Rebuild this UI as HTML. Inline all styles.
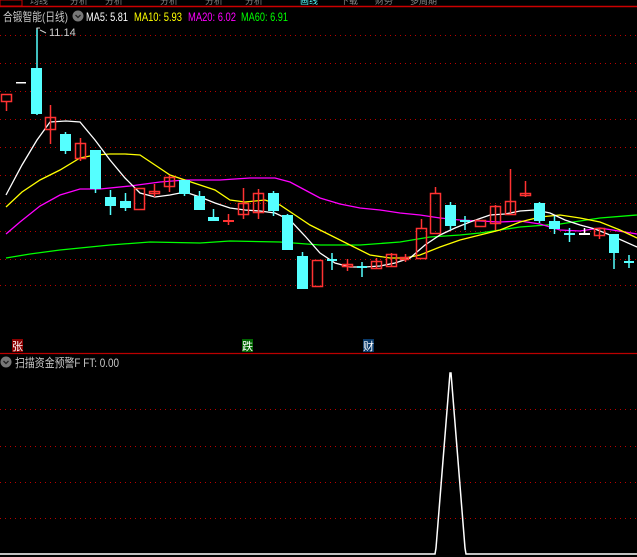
<!DOCTYPE html>
<html><head><meta charset="utf-8"><style>
body{margin:0;background:#000;width:637px;height:557px;overflow:hidden;font-family:"Liberation Sans","Noto Sans CJK SC",sans-serif}
</style></head><body>
<svg width="637" height="557" xmlns="http://www.w3.org/2000/svg" style="display:block">
<rect width="637" height="557" fill="#000"/>
<rect x="0" y="0" width="22" height="6" fill="none" stroke="#c00" stroke-width="1"/>
<line x1="0" y1="6.5" x2="637" y2="6.5" stroke="#c00" stroke-width="1.5"/>
<g fill="#888" font-size="9">
<text x="30" y="4">均线</text><text x="70" y="4">分析</text><text x="105" y="4">分析</text><text x="160" y="4">分析</text><text x="205" y="4">分析</text><text x="245" y="4">分析</text><text x="300" y="4" fill="#5ff">画线</text><text x="340" y="4">下载</text><text x="375" y="4">财务</text><text x="410" y="4">多周期</text>
</g>
<text x="3" y="21" font-size="12" fill="#c8c8c8" textLength="65" lengthAdjust="spacingAndGlyphs">合锻智能(日线)</text>
<circle cx="78" cy="16" r="5.5" fill="#777"/>
<path d="M75.5 15 L78 17.5 L80.5 15" stroke="#222" stroke-width="1.3" fill="none"/>
<text x="86" y="21" font-size="12" fill="#fff" textLength="42" lengthAdjust="spacingAndGlyphs">MA5: 5.81</text>
<text x="134" y="21" font-size="12" fill="#ff0" textLength="48" lengthAdjust="spacingAndGlyphs">MA10: 5.93</text>
<text x="188" y="21" font-size="12" fill="#f0f" textLength="48" lengthAdjust="spacingAndGlyphs">MA20: 6.02</text>
<text x="241" y="21" font-size="12" fill="#0f0" textLength="47" lengthAdjust="spacingAndGlyphs">MA60: 6.91</text>
<g stroke="#b00" stroke-width="1" stroke-dasharray="1,4">
<line x1="0" y1="35.5" x2="637" y2="35.5"/><line x1="0" y1="63.5" x2="637" y2="63.5"/><line x1="0" y1="91.5" x2="637" y2="91.5"/><line x1="0" y1="119.5" x2="637" y2="119.5"/><line x1="0" y1="147.5" x2="637" y2="147.5"/><line x1="0" y1="175.5" x2="637" y2="175.5"/><line x1="0" y1="203.5" x2="637" y2="203.5"/><line x1="0" y1="231.5" x2="637" y2="231.5"/><line x1="0" y1="259.5" x2="637" y2="259.5"/><line x1="0" y1="285.5" x2="637" y2="285.5"/>
<line x1="0" y1="409.5" x2="637" y2="409.5"/><line x1="0" y1="446.5" x2="637" y2="446.5"/><line x1="0" y1="482.5" x2="637" y2="482.5"/><line x1="0" y1="518.5" x2="637" y2="518.5"/>
</g>
<polyline fill="none" stroke="#0f0" stroke-width="1.3" points="6,258 30,254 60,250 80,248 110,245 150,242 200,243 230,241 280,242 320,245 360,245 400,242 430,237 460,235 480,233 520,227 560,224 600,218 637,215"/>
<polyline fill="none" stroke="#f0f" stroke-width="1.3" points="6,234 20,222 40,206 60,195 80,189 100,189 130,186 160,182 185,180 220,180 250,178 275,178 290,182 305,190 320,198 340,204 360,208 380,210 400,213 420,215 440,218 460,220 480,221 500,222 520,221 540,224 560,230 580,231 600,228 637,234"/>
<polyline fill="none" stroke="#ff0" stroke-width="1.3" points="6,207 22,192 40,180 60,170 80,158 95,155 110,154 125,154 140,155 155,165 170,175 185,180 200,185 215,190 230,200 245,202 265,200 280,205 295,215 310,225 330,235 350,245 370,255 390,258 405,258 420,255 440,247 460,240 480,235 500,230 520,222 540,217 560,215 580,218 600,222 620,230 637,238"/>
<polyline fill="none" stroke="#fff" stroke-width="1.3" points="6,195 22,165 37,140 50,122 66,121 80,122 95,140 110,160 125,178 140,193 155,197 170,195 185,192 200,197 215,203 230,208 245,210 260,211 275,213 290,220 305,236 320,253 335,263 350,267 365,267 380,266 395,263 410,258 425,245 440,235 455,228 470,222 490,215 505,214 520,211 535,210 550,213 565,220 580,225 595,229 610,235 637,247"/>
<g stroke-width="1.5">
<g stroke="#ff3232">
<line x1="6.5" y1="101" x2="6.5" y2="111"/><line x1="50.5" y1="105" x2="50.5" y2="144"/><line x1="80.5" y1="138" x2="80.5" y2="161"/><line x1="154.5" y1="184" x2="154.5" y2="197"/><line x1="169.5" y1="175" x2="169.5" y2="192"/><line x1="228.5" y1="214" x2="228.5" y2="225"/><line x1="243.5" y1="188" x2="243.5" y2="219"/><line x1="258.5" y1="189" x2="258.5" y2="219"/><line x1="347.5" y1="259" x2="347.5" y2="271"/><line x1="376.5" y1="258" x2="376.5" y2="268"/><line x1="391.5" y1="253" x2="391.5" y2="266"/><line x1="405.5" y1="254" x2="405.5" y2="262"/><line x1="421.5" y1="219" x2="421.5" y2="228"/><line x1="435.5" y1="187" x2="435.5" y2="193"/><line x1="495.5" y1="205" x2="495.5" y2="230"/><line x1="510.5" y1="169" x2="510.5" y2="213"/><line x1="525.5" y1="181" x2="525.5" y2="197"/><line x1="599.5" y1="228" x2="599.5" y2="239"/>
</g>
<g stroke="#55ffff">
<line x1="37" y1="28" x2="37" y2="115"/><line x1="65.5" y1="132" x2="65.5" y2="154"/><line x1="95.5" y1="150" x2="95.5" y2="193"/><line x1="110.5" y1="190" x2="110.5" y2="215"/><line x1="125.5" y1="193" x2="125.5" y2="211"/><line x1="184.5" y1="180" x2="184.5" y2="196"/><line x1="199.5" y1="191" x2="199.5" y2="210"/><line x1="213.5" y1="209" x2="213.5" y2="221"/><line x1="273.5" y1="191" x2="273.5" y2="216"/><line x1="287.5" y1="214" x2="287.5" y2="250"/><line x1="302.5" y1="252" x2="302.5" y2="289"/><line x1="332" y1="253" x2="332" y2="270"/><line x1="362" y1="262" x2="362" y2="277"/><line x1="450.5" y1="202" x2="450.5" y2="230"/><line x1="465" y1="216" x2="465" y2="230"/><line x1="539.5" y1="202" x2="539.5" y2="223"/><line x1="554.5" y1="216" x2="554.5" y2="234"/><line x1="569.5" y1="228" x2="569.5" y2="242"/><line x1="614" y1="234" x2="614" y2="269"/><line x1="629" y1="255" x2="629" y2="268"/>
</g>
<line x1="584.5" y1="228" x2="584.5" y2="234" stroke="#fff"/>
</g>
<g fill="#55ffff">
<rect x="31" y="68" width="11" height="46"/><rect x="60" y="134" width="11" height="17"/><rect x="90" y="150" width="11" height="39"/><rect x="105" y="197" width="11" height="9"/><rect x="120" y="201" width="11" height="7"/><rect x="179" y="180" width="11" height="14"/><rect x="194" y="196" width="11" height="14"/><rect x="208" y="217" width="11" height="4"/><rect x="268" y="193" width="11" height="18"/><rect x="282" y="215" width="11" height="35"/><rect x="297" y="256" width="11" height="33"/><rect x="327" y="259" width="10" height="2"/><rect x="357" y="266" width="10" height="2"/><rect x="445" y="205" width="11" height="21"/><rect x="460" y="220" width="10" height="2"/><rect x="534" y="203" width="11" height="18"/><rect x="549" y="221" width="11" height="8"/><rect x="564" y="233" width="11" height="2"/><rect x="609" y="234" width="10" height="19"/><rect x="624" y="261" width="10" height="2"/>
</g>
<rect x="579" y="233" width="11" height="2" fill="#fff"/>
<rect x="16" y="82" width="10" height="1.5" fill="#fff"/>
<g fill="none" stroke="#ff3232" stroke-width="1.5">
<rect x="1.5" y="94.5" width="10" height="7"/><rect x="45.5" y="117.5" width="10" height="12"/><rect x="75.5" y="143.5" width="10" height="15"/><rect x="134.5" y="188.5" width="10" height="21"/><rect x="149.5" y="191.5" width="10" height="2"/><rect x="164.5" y="177.5" width="10" height="9"/><rect x="238.5" y="203.5" width="10" height="11"/><rect x="253.5" y="193.5" width="10" height="19"/><rect x="312.5" y="260.5" width="10" height="26"/><rect x="342.5" y="264.5" width="10" height="2"/><rect x="371.5" y="261.5" width="10" height="7"/><rect x="386.5" y="254.5" width="10" height="12"/><rect x="400.5" y="257.5" width="8" height="2"/><rect x="416.5" y="228.5" width="10" height="30"/><rect x="430.5" y="193.5" width="10" height="40"/><rect x="475.5" y="220.5" width="10" height="6"/><rect x="490.5" y="206.5" width="10" height="17"/><rect x="505.5" y="201.5" width="10" height="13"/><rect x="520.5" y="193.5" width="10" height="2"/><rect x="594.5" y="228.5" width="10" height="7"/>
</g>
<rect x="223" y="220" width="11" height="2" fill="#ff3232"/>
<path d="M37 30 L37 28 L40 28 M40 30 L46 33" stroke="#ccc" fill="none" stroke-width="1"/>
<text x="49" y="36" font-size="11" fill="#ccc">11.14</text>
<rect x="12" y="339" width="11" height="13" fill="#8b0000"/><text x="12" y="350" font-size="11" fill="#fff">张</text>
<rect x="242" y="339" width="11" height="13" fill="#006400"/><text x="242" y="350" font-size="11" fill="#fff">跌</text>
<rect x="363" y="339" width="11" height="13" fill="#0a3a6a"/><text x="363" y="350" font-size="11" fill="#fff">财</text>
<line x1="0" y1="353.5" x2="637" y2="353.5" stroke="#b00" stroke-width="1.2"/>
<circle cx="6" cy="362" r="5.5" fill="#777"/>
<path d="M3.5 361 L6 363.5 L8.5 361" stroke="#222" stroke-width="1.3" fill="none"/>
<text x="15" y="367" font-size="12" fill="#c8c8c8" textLength="104" lengthAdjust="spacingAndGlyphs">扫描资金预警F  FT: 0.00</text>
<polyline fill="none" stroke="#fff" stroke-width="1.5" points="0,554 435,554 436,548 450,373 451,373 465,548 466,554 637,554"/>
</svg>
</body></html>
